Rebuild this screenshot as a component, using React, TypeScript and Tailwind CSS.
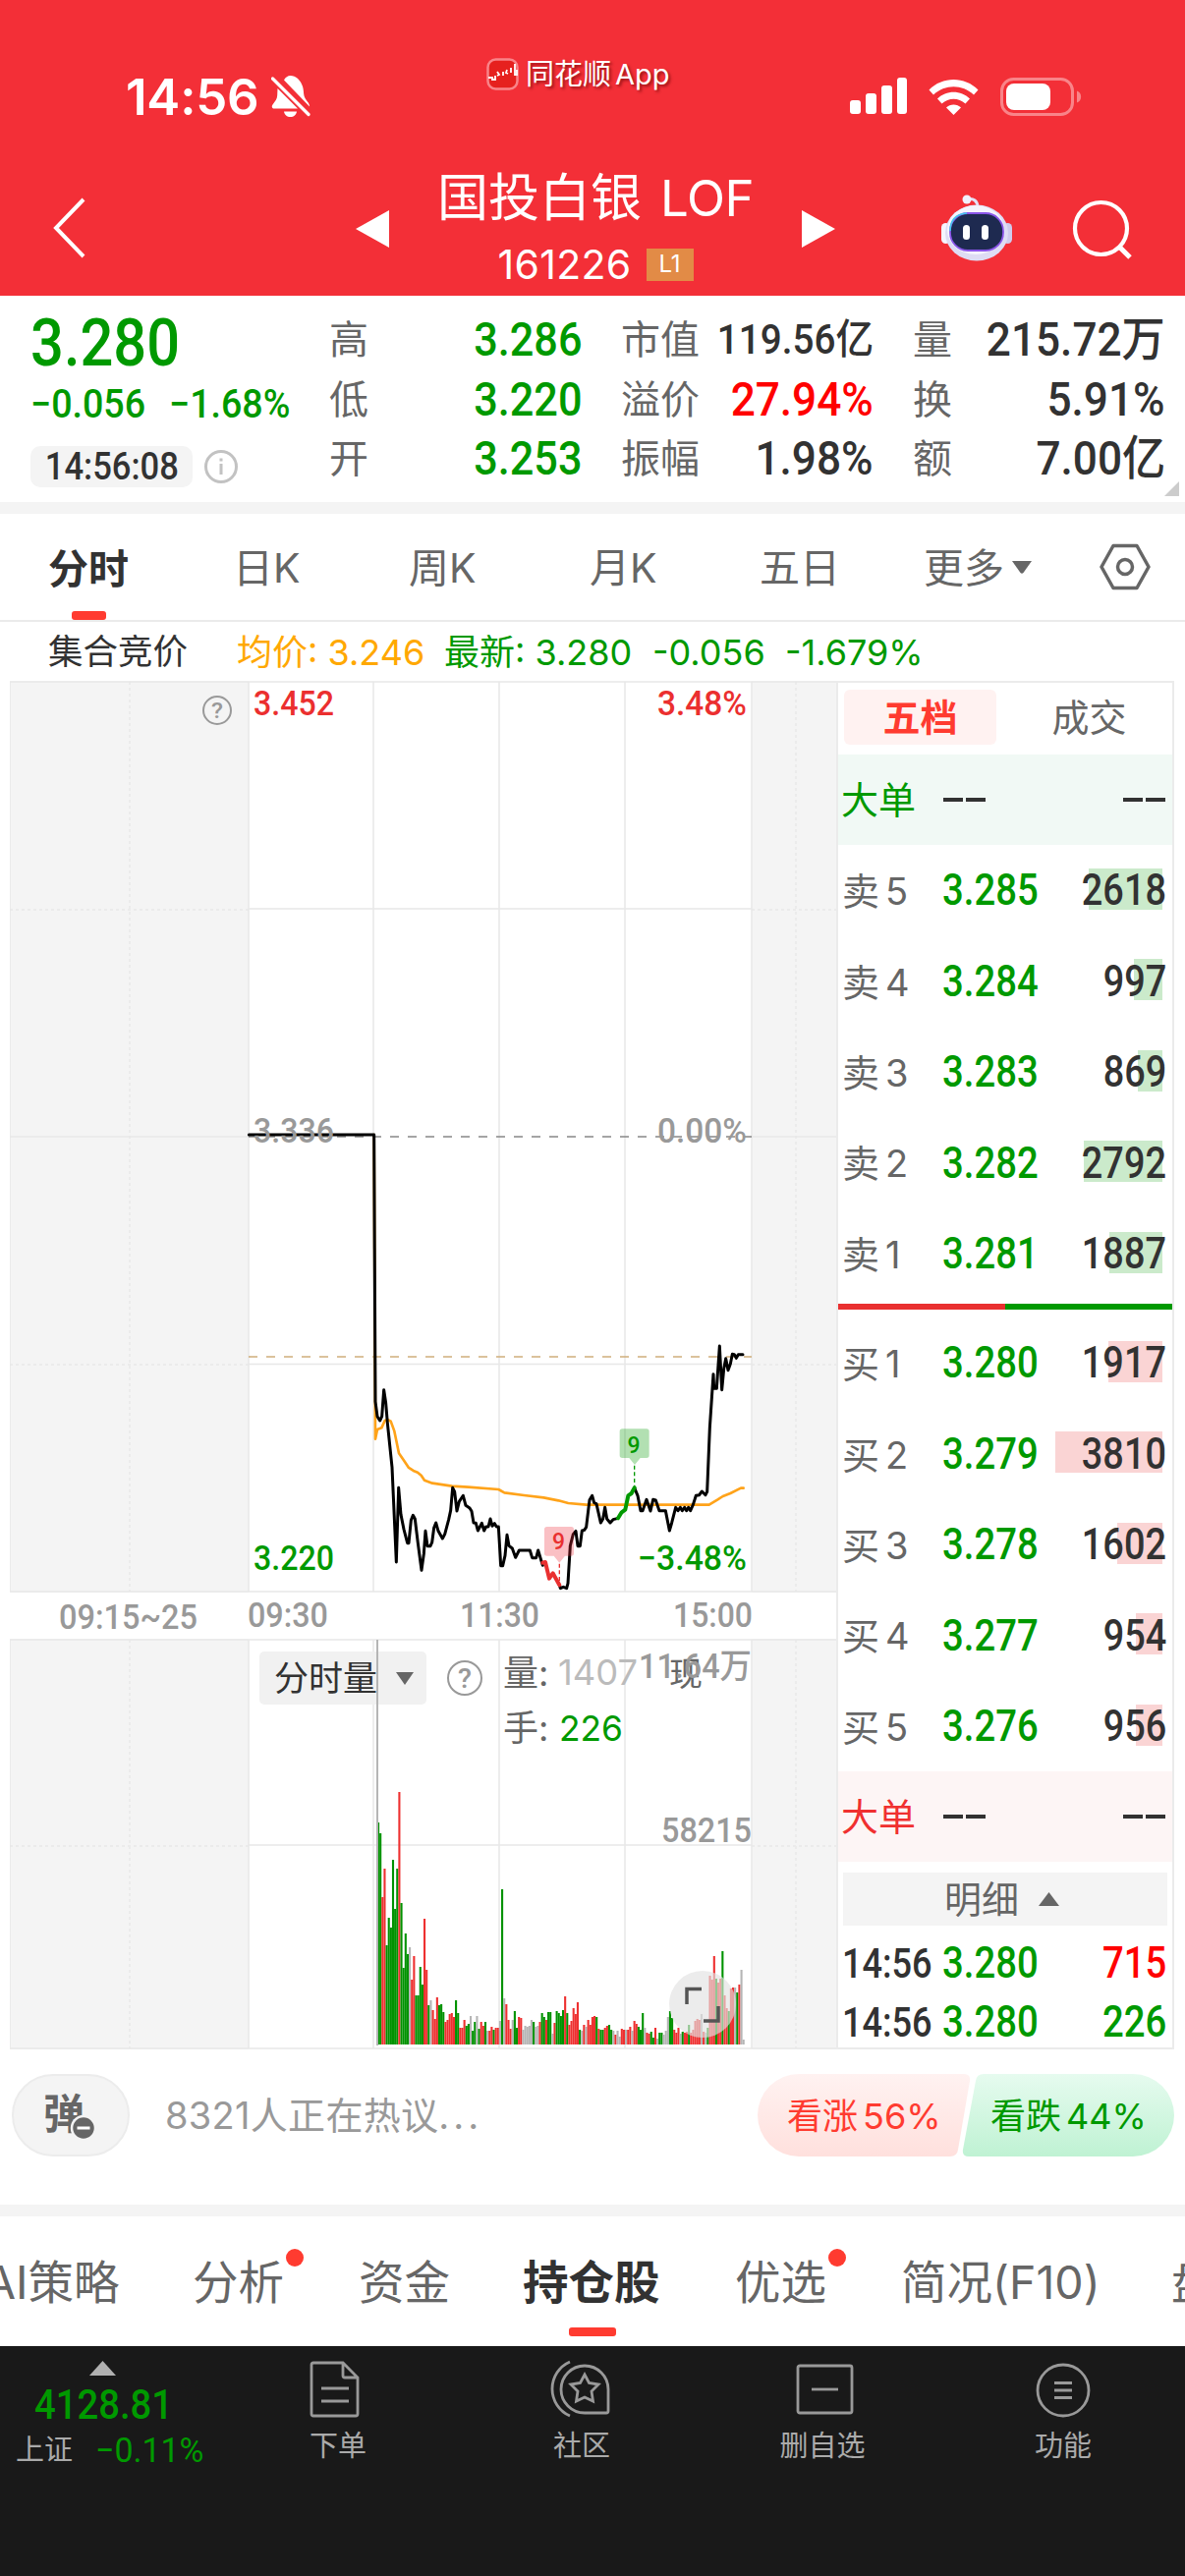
import { ReactNode } from "react";
import clsx from "clsx";

type Tone = "up" | "down" | "flat";

const toneText: Record<Tone, string> = {
  up: "text-[#ff0000]",
  down: "text-[#009900]",
  flat: "text-[#323232]",
};

/* Condensed figures used for every quote value */
const Num = ({ className, children }: { className?: string; children: ReactNode }) => (
  <span
    className={clsx(
      "inline-block whitespace-nowrap font-['Roboto','Noto_Sans_CJK_SC',sans-serif] font-medium leading-none",
      className
    )}
  >
    {children}
  </span>
);

const StatusBar = () => (
  <div className="flex h-[150px] pl-[128px] pt-[58px] text-white">
    <div className="flex h-[80px] w-[367px] items-center">
      <span className="w-[148px] text-[51px] font-semibold leading-none tracking-[-0.2px]">14:56</span>
      <svg width="40" height="44" viewBox="0 0 40 44" fill="#fff">
        <path d="M13 5.500C14.500 2.500 17 1 19.500 1C25 1 30 5.500 32 12C33.500 17 32.500 20 34.500 24C36 27 39 28.500 39 32.500L13 5.500Z" />
        <path d="M6.500 14L27 34.500H3C1 34.500 0 32.500 1.500 30.500C4 27 6 25 6.200 21Z" />
        <path d="M13 37.500H26C25.500 41 23 43 19.500 43S13.500 41 13 37.500Z" />
        <path d="M1.500 4L38 40.500" stroke="#fff" strokeWidth="3.200" strokeLinecap="round" />
      </svg>
    </div>
    <div className="flex h-[34px] w-[370px] items-center">
      <svg width="33" height="33" viewBox="0 0 33 33">
        <rect x="1.500" y="1.500" width="30" height="30" rx="8" fill="#e6211f" stroke="#f98489" strokeWidth="2.500" />
        <path
          d="M2 20h3M6 19v3h3v-4M11 14l2 3-2 1M17 18v-4M21 12l-1 3 2 1M25 15v-5M29 6v11h1M31 12v6"
          fill="none"
          stroke="#fff"
          strokeWidth="1.800"
        />
      </svg>
      <span className="ml-[7px] flex items-center gap-[4px] whitespace-nowrap text-[29px] leading-none [text-shadow:2px_2px_3px_rgba(90,0,0,0.6)]">
        <span>同花顺</span>
        <span>App</span>
      </span>
    </div>
    <div className="flex h-[80px] items-center">
      <svg width="238" height="42" viewBox="0 0 238 42" fill="#fff">
        <rect x="0" y="25" width="11" height="14" rx="3" />
        <rect x="16" y="18" width="11" height="21" rx="3" />
        <rect x="32" y="10" width="11" height="29" rx="3" />
        <rect x="48" y="2" width="10" height="37" rx="3" />
        <path d="M80.500 14.500C94 0.500 117 0.500 130.500 14.500L126 19.500C114.500 8.500 96.500 8.500 85 19.500Z" />
        <path d="M89 23.500C98 14.500 113 14.500 122 23.500L117.500 28.500C110.500 22 100.500 22 93.500 28.500Z" />
        <path d="M98 32.500C102 28.500 109 28.500 113 32.500L105.500 40Z" />
        <rect x="154.500" y="3.500" width="72" height="36" rx="12" fill="none" stroke="#f98489" strokeWidth="3" />
        <rect x="159" y="8" width="45" height="27" rx="8" />
        <path d="M231 15.500C236.500 17 236.500 26 231 27.500Z" fill="#f98489" />
      </svg>
    </div>
  </div>
);

const TitleBar = () => (
  <div className="flex h-[151px] items-start pl-[53px] text-white">
    <svg className="mt-[50px]" width="36" height="64" viewBox="0 0 36 64" fill="none" stroke="#fff" strokeWidth="4">
      <path d="M32 3L4 32L32 61" />
    </svg>
    <svg className="ml-[272px] mt-[63px]" width="36" height="40" viewBox="0 0 36 40" fill="#fff">
      <path d="M1 20L35 1V39Z" />
    </svg>
    <div className="flex w-[418px] flex-col items-center pt-[25px]">
      <div className="flex w-[322px] items-center justify-between whitespace-nowrap text-[52px] leading-[54px]">
        <span>国投白银</span>
        <span className="text-[51px] tracking-[-0.5px]">LOF</span>
      </div>
      <div className="mt-[20px] flex items-center gap-[15px]">
        <span className="text-[41px] leading-[40px] tracking-[0.3px]">161226</span>
        <span className="flex h-[33px] w-[48px] items-center justify-center bg-[#e28b46] text-[24px] leading-none">
          L1
        </span>
      </div>
    </div>
    <svg className="mt-[63px]" width="36" height="40" viewBox="0 0 36 40" fill="#fff">
      <path d="M35 20L1 1V39Z" />
    </svg>
    <svg className="ml-[106px] mt-[47px]" width="74" height="70" viewBox="0 0 74 70">
      <path d="M27 6C34 4 38 8 38 14" fill="none" stroke="#e4e1f7" strokeWidth="3" />
      <circle cx="27" cy="6" r="4.500" fill="#f1effc" />
      <rect x="1" y="30" width="9" height="21" rx="4.500" fill="#f5f4ff" />
      <rect x="64" y="30" width="9" height="21" rx="4.500" fill="#cfcbed" />
      <ellipse cx="37" cy="40" rx="32" ry="28.500" fill="#dedcf4" />
      <ellipse cx="36" cy="37" rx="29" ry="25" fill="#f5f4fd" />
      <rect x="10" y="20" width="54" height="38" rx="18" fill="#1e2a50" stroke="#8a55e8" strokeWidth="1.800" />
      <path d="M10 38C10 27 15 21 27 20" fill="none" stroke="#42c8ec" strokeWidth="1.600" />
      <rect x="23" y="32" width="7" height="15" rx="3.500" fill="#fff" />
      <rect x="42" y="32" width="7" height="15" rx="3.500" fill="#fff" />
    </svg>
    <svg className="ml-[59px] mt-[51px]" width="64" height="64" viewBox="0 0 64 64" fill="none" stroke="#fff" strokeWidth="4.200">
      <circle cx="30.500" cy="31.500" r="26.500" />
      <path d="M49 50L60 61" strokeWidth="5" />
    </svg>
  </div>
);

interface Stat {
  label: string;
  value: string;
  tone: Tone;
  size: string;
}

const statColumns: Stat[][] = [
  [
    { label: "高", value: "3.286", tone: "down", size: "scale-x-[0.9] text-[48px]" },
    { label: "低", value: "3.220", tone: "down", size: "scale-x-[0.9] text-[48px]" },
    { label: "开", value: "3.253", tone: "down", size: "scale-x-[0.9] text-[48px]" },
  ],
  [
    { label: "市值", value: "119.56亿", tone: "flat", size: "scale-x-[0.92] text-[42px]" },
    { label: "溢价", value: "27.94%", tone: "up", size: "scale-x-[0.92] text-[48px]" },
    { label: "振幅", value: "1.98%", tone: "flat", size: "scale-x-[0.92] text-[48px]" },
  ],
  [
    { label: "量", value: "215.72万", tone: "flat", size: "scale-x-[0.92] text-[48px]" },
    { label: "换", value: "5.91%", tone: "flat", size: "scale-x-[0.92] text-[48px]" },
    { label: "额", value: "7.00亿", tone: "flat", size: "scale-x-[0.92] text-[48px]" },
  ],
];

const QuotePanel = () => (
  <div className="relative flex h-[210px] bg-white">
    <div className="w-[335px] shrink-0 pl-[31px] pt-[15px]">
      <Num className="h-[68px] origin-left scale-x-[0.89] text-[67px] leading-[68px] text-[#009900]">3.280</Num>
      <div className="mt-[8px] flex h-[40px] items-center text-[#009900]">
        <Num className="w-[141px] origin-left scale-x-[0.94] text-[40px]">−0.056</Num>
        <Num className="origin-left scale-x-[0.94] text-[40px]">−1.68%</Num>
      </div>
      <div className="mt-[22px] flex items-center">
        <span className="flex h-[42px] w-[165px] items-center justify-center rounded-[10px] bg-[#f4f4f4]">
          <Num className="scale-x-[0.91] text-[38px] text-[#323232]">14:56:08</Num>
        </span>
        <svg className="ml-[11px]" width="36" height="36" viewBox="0 0 36 36" fill="none" stroke="#c2c2c2" strokeWidth="3">
          <circle cx="18" cy="18" r="15.500" />
          <path d="M18 15V26M18 9.500V12.500" />
        </svg>
      </div>
    </div>
    <div className="flex gap-[40px] pt-[15px]">
      {statColumns.map((items, i) => (
        <div key={i} className="w-[257px]">
          {items.map((s) => (
            <div key={s.label} className="flex h-[60.500px] items-center justify-between">
              <span className="text-[40px] leading-none text-[#666]">{s.label}</span>
              <Num className={clsx("origin-right", s.size, toneText[s.tone])}>{s.value}</Num>
            </div>
          ))}
        </div>
      ))}
    </div>
    <svg className="absolute bottom-[6px] right-[6px]" width="15" height="15" viewBox="0 0 15 15" fill="#ccc">
      <path d="M15 0V15H0Z" />
    </svg>
  </div>
);

const periods = [
  { label: "日K", width: "w-[179px]" },
  { label: "周K", width: "w-[184px]" },
  { label: "月K", width: "w-[173px]" },
  { label: "五日", width: "w-[167px]" },
];

const PeriodTabs = () => (
  <div className="flex h-[110px] items-center border-b-2 border-[#ebebeb] bg-white pl-[49px] text-[41px] leading-none text-[#666]">
    <div className="flex h-full w-[188px] flex-col justify-between pt-[36px]">
      <span className="font-bold text-[#323232]">分时</span>
      <span className="ml-[24px] h-[9px] w-[35px] rounded-[3px] bg-[#ff3b30]" />
    </div>
    {periods.map((p) => (
      <span key={p.label} className={clsx("pt-[3px]", p.width)}>
        {p.label}
      </span>
    ))}
    <span className="w-[90px] pt-[3px]">更多</span>
    <svg width="20" height="13" viewBox="0 0 20 13" fill="#666">
      <path d="M0 0H20L11.500 12Q10 13.500 8.500 12Z" />
    </svg>
    <svg className="ml-[69px]" width="52" height="48" viewBox="0 0 52 48" fill="none" stroke="#666" strokeWidth="3.500">
      <path d="M14 2.500H38L50 24L38 45.500H14L2 24Z" strokeLinejoin="round" />
      <circle cx="26" cy="24" r="7.500" />
    </svg>
  </div>
);

const InfoRow = () => (
  <div className="flex h-[60px] items-center whitespace-nowrap bg-white pl-[49px] pt-[2px] text-[36px] leading-none text-[#009900]">
    <span className="w-[192px] text-[35.500px] text-[#323232]">集合竞价</span>
    <span className="w-[211px] text-[#ffa800]">均价: 3.246</span>
    <span className="w-[212px]">最新: 3.280</span>
    <span className="w-[135px]">-0.056</span>
    <span>-1.679%</span>
  </div>
);

/* One token per minute: g = falling, r = rising, x = unchanged, then the bar height */
const volumes =
  "g226 g215 r150 r179 g101 g129 g119 g188 g138 g179 r257 g144 g78 g113 g92 x99 r66 r90 g50 g50 g79 g61 r128 r76 g40 x45 r35 r26 r48 g40 g41 g33 r23 r25 r31 r32 r28 g45 g32 r17 r17 r25 g19 g21 x29 g14 g23 x29 g16 r23 r19 g23 x14 r14 r18 g15 r17 r17 x24 g158 x47 r41 r25 r16 x25 g34 g17 r28 r27 x15 x19 x18 x19 x25 g23 x18 x19 r23 g32 g28 r25 g33 g33 x11 r22 g34 g32 g29 g35 r49 g32 r20 r24 r37 r31 r43 g15 x14 r20 x18 r25 r20 r28 r29 g28 r16 g15 g15 r17 r19 g20 g15 x14 r10 x14 x8 r16 r15 x15 r15 r18 x14 r24 r21 g18 g15 g32 x17 r12 r11 g13 g7 r17 x6 g12 g12 x10 x14 x28 g34 g27 r15 r12 r17 x11 g13 r12 r13 g20 r12 r15 r24 r26 r25 x31 r13 x12 g17 r70 r66 r90 g67 r63 r67 g95 r50 r37 g34 r57 r58 x58 g53 r61 x76 x5".split(
    " "
  );

const barColor: Record<string, string> = { g: "#009200", r: "#ee3030", x: "#b5b5b5" };

const priceStart =
  "-320,105 62,105 66,920 72,965 80,978 86,965 92,884 98,925 103,985 117,1120 130,1410 137,1183 144,1265 153,1310 164,1352 168,1352 175,1282 181,1267 187,1278 196,1352 207,1435 214,1385 219,1315 225,1361 234,1361 239,1350 245,1305 251,1290 258,1315 271,1338 278,1325 290,1280 296,1252 302,1183 308,1195 315,1254 322,1225 334,1207 342,1237 354,1245 360,1255 366,1290 373,1291 379,1314 391,1291 398,1314 404,1302 411,1302 417,1278 423,1300 430,1292 436,1302 442,1302 449,1421 455,1421 462,1390 468,1327 474,1360 484,1368 494,1396 505,1374 538,1374 545,1397 557,1397 563,1374 577,1420";
const priceMiddle =
  "628,1480 631,1490 640,1486 650,1490 654,1475 661,1360 670,1325 678,1315 684,1361 691,1361 697,1314 704,1312 710,1303 720,1220 728,1207 734,1229 741,1232 754,1290 761,1278 767,1243 773,1278 783,1290 792,1280 807,1276";
const priceEnd =
  "857,1183 867,1207 876,1253 882,1253 894,1219 906,1254 914,1219 922,1221 933,1253 952,1253 964,1314 971,1290 983,1243 990,1253 997,1243 1003,1253 1010,1243 1016,1253 1022,1243 1028,1253 1036,1235 1045,1207 1055,1205 1063,1194 1074,1205 1079,1195 1087,1000 1098,836 1100,880 1108,880 1117,750 1124,884 1130,820 1136,788 1143,824 1150,805 1156,775 1162,776 1168,787 1174,776 1188,776";
const average =
  "62,105 66,1034 72,1005 85,1000 95,978 103,975 113,980 124,1010 138,1078 152,1098 168,1122 182,1131 195,1136 206,1145 216,1160 240,1169 300,1178 350,1181 442,1188 460,1198 520,1206 580,1213 625,1222 655,1230 710,1235 1085,1235 1110,1220 1127,1209 1150,1200 1182,1184 1190,1184";

interface LabelProps {
  x: number;
  y: number;
  width: number;
  fill?: string;
  size?: number;
  children: string;
}

const Label = ({ x, y, width, fill = "#999", size = 35, children }: LabelProps) => (
  <text
    x={x}
    y={y}
    fill={fill}
    fontSize={size}
    textLength={width}
    lengthAdjust="spacingAndGlyphs"
    className="font-['Roboto','Noto_Sans_CJK_SC',sans-serif] font-medium"
  >
    {children}
  </text>
);

const Chart = () => (
  <div className="relative w-[841px] shrink-0">
    <svg className="block" width="841" height="1393" viewBox="10 693 841 1393">
      <rect x="10" y="693" width="842" height="928" fill="#f4f4f4" />
      <rect x="10" y="1668" width="842" height="418" fill="#f4f4f4" />
      <rect x="253" y="693" width="512" height="1393" fill="#fff" />

      <g stroke="#ebebeb" strokeWidth="2" strokeDasharray="3 3">
        <path d="M132 694V1620M810 694V1620M10 926H253M765 926H852M10 1389H253M765 1389H852" />
        <path d="M132 1669V2085M810 1669V2085M10 1879H253M765 1879H852" />
      </g>
      <g fill="none" stroke="#e8e8e8" strokeWidth="1.500">
        <path d="M10 694H852M10 1620H852M10 1669H852M10 2085H852M10 694V1620M10 1669V2085" />
        <path d="M253 694V1620M380 694V1620M508 694V1620M636 694V1620M765 694V1620" />
        <path d="M253 1669V2085M380 1669V2085M508 1669V2085M636 1669V2085M765 1669V2085" />
        <path d="M253 925H765M253 1388.500H765M10 1157H253M765 1157H852M253 1878H765" />
      </g>
      <path d="M253 1157H765" stroke="#888" strokeWidth="1.600" strokeDasharray="9 9" />
      <path d="M253 1381H765" stroke="#cfae7c" strokeWidth="1.600" strokeDasharray="9 9" />

      <g
        transform="translate(360 1120) scale(0.33333)"
        fill="none"
        strokeWidth="9"
        strokeLinejoin="round"
        strokeLinecap="round"
      >
        <polyline points={average} stroke="#ffa31a" strokeWidth="8" />
        <polyline points={priceStart} stroke="#000" />
        <polyline points={priceMiddle} stroke="#000" />
        <polyline points={priceEnd} stroke="#000" />
        <polyline points="577,1412 585,1410 597,1460 608,1444 628,1480" stroke="#e93030" strokeWidth="12" />
        <polyline points="807,1276 818,1258 829,1250 838,1207 848,1200 857,1183" stroke="#009900" strokeWidth="12" />
        <path d="M628 1415V1480" stroke="#e93030" strokeWidth="4" strokeDasharray="12 8" strokeLinecap="butt" />
        <path d="M857 1115V1183" stroke="#009900" strokeWidth="4" strokeDasharray="12 8" strokeLinecap="butt" />
        <path
          d="M590 1302H664Q672 1302 672 1310V1383Q672 1391 664 1391H645L628 1412L611 1391H590Q582 1391 582 1383V1310Q582 1302 590 1302Z"
          fill="#f0303a"
          fillOpacity="0.300"
        />
        <path
          d="M820 1003H894Q902 1003 902 1011V1084Q902 1092 894 1092H875L858 1113L841 1092H820Q812 1092 812 1084V1011Q812 1003 820 1003Z"
          fill="#009900"
          fillOpacity="0.300"
        />
      </g>
      <Label x={562} y={1577} width={13} size={24} fill="#e93030">9</Label>
      <Label x={638.5} y={1478.5} width={13} size={24} fill="#009900">9</Label>

      <Label x={258} y={728} width={82} fill="#eb2f2f">3.452</Label>
      <Label x={669} y={728} width={91} fill="#eb2f2f">3.48%</Label>
      <Label x={258} y={1163} width={82}>3.336</Label>
      <Label x={669} y={1163} width={91}>0.00%</Label>
      <Label x={258} y={1598} width={82} fill="#009900">3.220</Label>
      <Label x={649} y={1598} width={111} fill="#009900">−3.48%</Label>

      <Label x={60} y={1658} width={141}>09:15~25</Label>
      <Label x={252} y={1656} width={82}>09:30</Label>
      <Label x={468} y={1656} width={81}>11:30</Label>
      <Label x={685} y={1656} width={81}>15:00</Label>

      <g fill="none" stroke="#999" strokeWidth="2">
        <circle cx="221" cy="723" r="14" />
        <circle cx="473" cy="1708" r="17" />
      </g>
      <Label x={215} y={731} width={12} size={22}>?</Label>
      <Label x={466} y={1718} width={14} size={28}>?</Label>

      <g className="font-['Inter','Noto_Sans_CJK_SC',sans-serif]" fontSize="36" fill="#666">
        <text x="512" y="1716">量:</text>
        <text x="512" y="1772">手:</text>
        <text x="681" y="1716" fontSize="34">现</text>
        <text x="568" y="1715" fill="#bbb" textLength="81" lengthAdjust="spacingAndGlyphs">1407</text>
        <text x="569" y="1772" fill="#009900" textLength="65" lengthAdjust="spacingAndGlyphs">226</text>
      </g>
      <Label x={650} y={1708} width={115}>11.64万</Label>
      <Label x={673} y={1875} width={92}>58215</Label>

      {volumes.map((v, i) => {
        const h = Number(v.slice(1));
        return <rect key={i} x={384 + i * 2.136} y={2081 - h} width="2.100" height={h} fill={barColor[v[0]]} />;
      })}
    </svg>
    <div className="absolute left-[254px] top-[988px] flex h-[54px] w-[170px] items-center rounded-[5px] bg-[#f0f0f0]/90 pl-[15px]">
      <span className="w-[124px] text-[35px] leading-none text-[#323232]">分时量</span>
      <svg width="18" height="13" viewBox="0 0 18 13" fill="#666">
        <path d="M0 0H18L9 13Z" />
      </svg>
    </div>
    <div className="absolute left-[373px] top-[976px] h-[413px] w-[2px] bg-[#b5b5b5]" />
    <svg className="absolute left-[671px] top-[1313px]" width="68" height="68" viewBox="0 0 68 68">
      <circle cx="34" cy="34" r="34" fill="#e2e2e2" fillOpacity="0.650" />
      <path d="M18 34V18.500H33M50 36V51H35" fill="none" stroke="#555" strokeWidth="3.500" />
    </svg>
  </div>
);

interface Level {
  label: string;
  price: string;
  volume: number;
  bar: number;
}

const asks: Level[] = [
  { label: "卖5", price: "3.285", volume: 2618, bar: 75 },
  { label: "卖4", price: "3.284", volume: 997, bar: 29 },
  { label: "卖3", price: "3.283", volume: 869, bar: 25 },
  { label: "卖2", price: "3.282", volume: 2792, bar: 80 },
  { label: "卖1", price: "3.281", volume: 1887, bar: 54 },
];

const bids: Level[] = [
  { label: "买1", price: "3.280", volume: 1917, bar: 55 },
  { label: "买2", price: "3.279", volume: 3810, bar: 109 },
  { label: "买3", price: "3.278", volume: 1602, bar: 46 },
  { label: "买4", price: "3.277", volume: 954, bar: 27 },
  { label: "买5", price: "3.276", volume: 956, bar: 27 },
];

const trades = [
  { time: "14:56", price: "3.280", volume: 715, tone: "up" as Tone },
  { time: "14:56", price: "3.280", volume: 226, tone: "down" as Tone },
];

const LevelRow = ({ level, barClass }: { level: Level; barClass: string }) => (
  <div className="relative flex h-[92.400px] items-center pl-[4px] pr-[6px] pt-[2px]">
    <span className="flex w-[102px] gap-[6px] text-[38px] leading-none text-[#666]">
      <span>{level.label[0]}</span>
      <span>{level.label[1]}</span>
    </span>
    <Num className="origin-left scale-x-[0.88] text-[43.500px] text-[#009900]">{level.price}</Num>
    <span
      className={clsx("absolute right-[10px] top-[24px] h-[42px]", barClass)}
      style={{ width: level.bar }}
    />
    <Num className="relative ml-auto origin-right scale-x-[0.87] text-[43.500px] text-[#323232]">{level.volume}</Num>
  </div>
);

const Dashes = () => (
  <span className="flex gap-[3px]">
    <span className="h-[3.500px] w-[20px] bg-[#323232]" />
    <span className="h-[3.500px] w-[20px] bg-[#323232]" />
  </span>
);

const BigOrderRow = ({ className }: { className: string }) => (
  <div className={clsx("flex h-[92px] items-center pl-[3px] pr-[7px]", className)}>
    <span className="w-[104px] text-[38px] leading-none">大单</span>
    <Dashes />
    <span className="ml-auto">
      <Dashes />
    </span>
  </div>
);

const OrderBook = () => (
  <div className="h-[1393px] w-[344px] border-2 border-[#ebebeb] bg-white text-[38px] leading-none">
    <div className="flex h-[73px] items-start px-[6px] pt-[7px]">
      <span className="flex h-[56px] w-[155px] items-center justify-center rounded-[6px] bg-[#fff2f1] font-bold text-[#ff3b30]">
        五档
      </span>
      <span className="flex h-[56px] flex-1 items-center justify-center pl-[16px] text-[#666]">成交</span>
    </div>
    <BigOrderRow className="bg-[#f1f9f5] text-[#009900]" />
    {asks.map((level) => (
      <LevelRow key={level.label} level={level} barClass="bg-[#cbeacb]" />
    ))}
    <div className="mt-[5px] mb-[8px] flex h-[6px]">
      <span className="w-1/2 bg-[#e93030]" />
      <span className="w-1/2 bg-[#009900]" />
    </div>
    {bids.map((level) => (
      <LevelRow key={level.label} level={level} barClass="bg-[#fad4d4]" />
    ))}
    <BigOrderRow className="bg-[#fdf5f5] text-[#f03030]" />
    <div className="mx-[5px] mt-[11px] flex h-[54px] items-center bg-[#f4f4f4] pl-[103px] text-[#666]">
      明细
      <svg className="ml-[20px]" width="21" height="14" viewBox="0 0 21 14" fill="#666">
        <path d="M10.500 0L21 14H0Z" />
      </svg>
    </div>
    <div className="pt-[9px]">
      {trades.map((t, i) => (
        <div key={i} className="flex h-[60px] items-center pl-[4px] pr-[6px]">
          <Num className="w-[102px] origin-left scale-x-[0.86] text-[42px] text-[#323232]">{t.time}</Num>
          <Num className="origin-left scale-x-[0.88] text-[43.500px] text-[#009900]">{t.price}</Num>
          <Num className={clsx("ml-auto origin-right scale-x-[0.88] text-[43.500px]", toneText[t.tone])}>
            {t.volume}
          </Num>
        </div>
      ))}
    </div>
  </div>
);

const CommentBar = () => (
  <div className="flex h-[158px] items-start bg-white pl-[12px] pt-[25px]">
    <div className="relative flex h-[84px] w-[120px] items-center rounded-full border-2 border-[#ececec] bg-[#f4f4f4] pl-[30px]">
      <span className="mb-[3px] text-[42px] font-bold leading-none text-[#666]">弹</span>
      <svg className="absolute left-[57px] top-[39px]" width="28" height="28" viewBox="0 0 28 28">
        <circle cx="14" cy="14" r="12" fill="#666" stroke="#f4f4f4" strokeWidth="2.500" />
        <path d="M7.500 14H20.500" stroke="#fff" strokeWidth="3" />
      </svg>
    </div>
    <span className="ml-[36px] w-[603px] whitespace-nowrap text-[38px] leading-[84px] tracking-[0.3px] text-[#999]">
      8321人正在热议<span className="tracking-[4px]">...</span>
    </span>
    <div className="relative h-[84px] w-[424px] text-[36px] leading-[84px]">
      <svg width="424" height="84" viewBox="0 0 424 84">
        <defs>
          <linearGradient id="bull" x1="0" y1="0" x2="0" y2="1">
            <stop offset="0" stopColor="#fff2f1" />
            <stop offset="1" stopColor="#ffe0dd" />
          </linearGradient>
          <linearGradient id="bear" x1="0" y1="0" x2="0" y2="1">
            <stop offset="0" stopColor="#e6fbef" />
            <stop offset="1" stopColor="#bff2d3" />
          </linearGradient>
        </defs>
        <path d="M42 0H210Q217 0 216 7L204 77Q203 84 196 84H42A42 42 0 0 1 42 0Z" fill="url(#bull)" />
        <path d="M382 0H230Q223 0 222 7L209 77Q208 84 215 84H382A42 42 0 0 0 382 0Z" fill="url(#bear)" />
      </svg>
      <div className="absolute inset-0 flex whitespace-nowrap pl-[30px] pt-[1px]">
        <span className="flex w-[207px] gap-[5px] text-[#ff3b30]">
          <span>看涨</span>
          <span>56%</span>
        </span>
        <span className="flex gap-[5px] text-[#009900]">
          <span>看跌</span>
          <span>44%</span>
        </span>
      </div>
    </div>
  </div>
);

const Dot = () => <span className="absolute right-[-20px] top-[-6px] size-[18px] rounded-full bg-[#ff3b30]" />;

const DetailTabs = () => (
  <div className="h-[132px] overflow-hidden bg-white pt-[43px]">
    <div className="ml-[-16px] flex w-[1320px] items-start whitespace-nowrap text-[46.500px] leading-[48px] text-[#666]">
      <span className="w-[212px]">AI策略</span>
      <div className="w-[169px]">
        <span className="relative">
          分析
          <Dot />
        </span>
      </div>
      <span className="w-[167px]">资金</span>
      <div className="w-[216px]">
        <span className="font-bold text-[#323232]">持仓股</span>
        <div className="ml-[47px] mt-[22px] h-[9px] w-[48px] rounded-[3px] bg-[#ff3b30]" />
      </div>
      <div className="w-[169px]">
        <span className="relative">
          优选
          <Dot />
        </span>
      </div>
      <span className="w-[275px]">简况(F10)</span>
      <span>盘口</span>
    </div>
  </div>
);

const NavItem = ({ width, label, children }: { width: string; label: string; children: ReactNode }) => (
  <div className={clsx("flex flex-col items-center pt-[14px]", width)}>
    <svg width="64" height="60" viewBox="0 0 64 60" fill="none" stroke="#999" strokeWidth="2.800">
      {children}
    </svg>
    <span className="mt-[13px] text-[29px] leading-[30px] text-[#aaa]">{label}</span>
  </div>
);

const BottomNav = () => (
  <div className="flex h-[234px] bg-[#191919]">
    <div className="w-[220px] pt-[15px]">
      <svg className="ml-[91px]" width="27" height="15" viewBox="0 0 27 15" fill="#b0b0b0">
        <path d="M13.500 0L27 15H0Z" />
      </svg>
      <Num className="ml-[35px] mt-[9px] origin-left scale-x-[0.91] text-[42px] text-[#009900]">4128.81</Num>
      <div className="flex items-center pl-[16px] pt-[2px]">
        <span className="w-[81px] text-[29px] leading-[46px] text-[#aaa]">上证</span>
        <Num className="origin-left scale-x-[0.97] text-[35px] font-normal text-[#009900]">−0.11%</Num>
      </div>
    </div>
    <NavItem width="w-[248px]" label="下单">
      <path d="M5 5Q5 3 7 3H37L52 18V55Q52 57 50 57H7Q5 57 5 55Z M37 3V16Q37 18 39 18H52M15 29H43M15 42H43" />
    </NavItem>
    <NavItem width="w-[248px]" label="社区">
      <path d="M20 2A30 30 0 0 0 20 57" />
      <path d="M35 6A24 24 0 0 0 35 54H57Q59 54 59 52V30A24 24 0 0 0 35 6Z" />
      <path d="M35 15L39.500 23.500L49 25L42 32L43.500 42L35 38L26.500 42L28 32L21 25L30.500 23.500Z" />
    </NavItem>
    <NavItem width="w-[242px]" label="删自选">
      <rect x="7" y="6" width="55" height="48" rx="2" />
      <path d="M21 30H48" />
    </NavItem>
    <NavItem width="w-[248px]" label="功能">
      <circle cx="32" cy="31" r="26" />
      <path d="M23 23.500H41M23 31H41M23 38.500H41" />
    </NavItem>
  </div>
);

const App = () => {
  return (
    <div className="h-[2622px] w-[1206px] overflow-hidden bg-white font-['Inter','Noto_Sans_CJK_SC',sans-serif]">
      <header className="h-[301px] bg-[#f32f37]">
        <StatusBar />
        <TitleBar />
      </header>
      <QuotePanel />
      <div className="h-[12px] bg-[#f4f4f4]" />
      <PeriodTabs />
      <InfoRow />
      <main className="flex h-[1393px] pl-[10px]">
        <Chart />
        <OrderBook />
      </main>
      <CommentBar />
      <div className="h-[12px] bg-[#f4f4f4]" />
      <DetailTabs />
      <BottomNav />
    </div>
  );
};

export default App;
